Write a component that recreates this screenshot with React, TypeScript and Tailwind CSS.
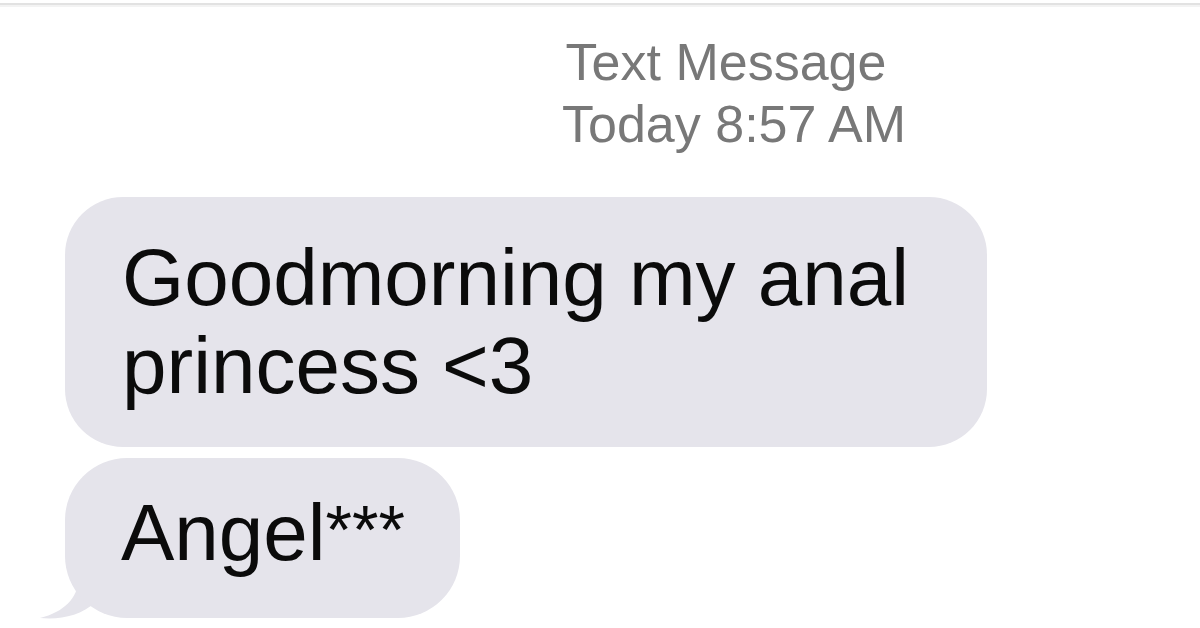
import React from "react";

export default function App() {
  return (
    <div
      className="w-[1200px] h-[628px] overflow-hidden bg-white flex flex-col"
      style={{ fontFamily: '"Liberation Sans", Arial, sans-serif' }}
    >
      <div className="h-[3px] shrink-0" />
      <div className="h-[2px] shrink-0 bg-[#e2e2e2]" />
      <div className="h-[2px] shrink-0 bg-[#f3f3f3]" />
      <div className="pt-[24px] pl-[530px]">
        <div className="w-[400px] text-center text-[52px] leading-[62px] text-[#787878]">
          <div className="pr-[8px]">Text Message</div>
          <div className="pl-[8px]">Today 8:57 AM</div>
        </div>
      </div>
      <div className="pl-[65px] pt-[42px] flex flex-col gap-[11px]">
        <div className="w-[922px] h-[250px] rounded-[58px] bg-[#e5e4eb] pl-[57px] pt-[37px] text-[80px] leading-[88px] text-[#0b0b0b]">
          <div>Goodmorning my anal</div>
          <div>princess &lt;3</div>
        </div>
        <div className="relative w-[395px] h-[160px]">
          <svg
            className="absolute left-[-27px] bottom-[-2px]"
            width="80"
            height="70"
            viewBox="0 0 80 70"
          >
            <path
              d="M40 0 L40 30 C40 48 26 62 2 68 C22 70 42 66 58 52 L70 40 Z"
              fill="#e5e4eb"
            />
          </svg>
          <div className="relative h-full rounded-[62px] bg-[#e5e4eb] pl-[56px] pt-[27px] text-[80px] leading-[88px] text-[#0b0b0b]">
            Angel<span className="text-[68px] align-[7px]">***</span>
          </div>
        </div>
      </div>
    </div>
  );
}
